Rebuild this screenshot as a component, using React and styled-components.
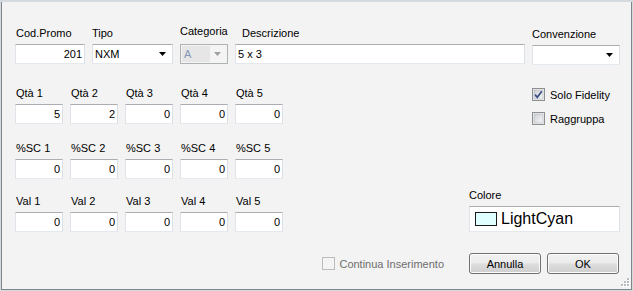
import React from 'react';
import styled, { createGlobalStyle } from 'styled-components';

const Global = createGlobalStyle`
  html, body { margin: 0; padding: 0; background: #d5dade; }
  body { font-family: "Liberation Sans", Arial, sans-serif; font-size: 11px; color: #000; }
  * { box-sizing: border-box; }
`;

const Frame = styled.div`
  width: 633px;
  height: 291px;
  padding: 2px 1px 1px 1px;
  background: #d5dade;
`;

const Window = styled.div`
  position: relative;
  height: 100%;
  background: #f3f3f3;
  border: 1px solid #7f858c;
  border-top: none;
  padding: 25px 11px 0 13px;
  display: flex;
  flex-direction: column;
`;

const TopRow = styled.div`
  display: flex;
  gap: 7px;
`;

const Field = styled.div`
  display: flex;
  flex-direction: column;
  width: ${p => (p.$w ? `${p.$w}px` : 'auto')};
  margin-top: ${p => p.$mt || 0}px;
`;

const Label = styled.div`
  height: 13px;
  line-height: 13px;
  white-space: nowrap;
  padding-left: ${p => p.$dx || 0}px;
  margin-top: ${p => p.$dy || 0}px;
  margin-bottom: ${p => 4 - (p.$dy || 0)}px;
`;

const TextBox = styled.div`
  height: ${p => p.$h || 20}px;
  background: #fff;
  border: 1px solid;
  border-color: #abadb3 #dbdfe6 #e3e9ef #e2e3ea;
  padding: 0 2px;
  display: flex;
  align-items: center;
  justify-content: ${p => (p.$right ? 'flex-end' : 'flex-start')};
  white-space: nowrap;
  overflow: hidden;
`;

const Combo = styled(TextBox)`
  justify-content: space-between;
  padding: 0 6px 0 2px;
  background: ${p => (p.$disabled ? '#f4f4f4' : '#fff')};
  border-color: ${p => (p.$disabled ? '#adb2b5' : '#abadb3 #dbdfe6 #e3e9ef #e2e3ea')};
`;

const DisabledSel = styled.span`
  display: inline-block;
  width: 28px;
  height: 16px;
  line-height: 16px;
  margin-left: -1px;
  padding-left: 2px;
  background: #e6e6e6;
  color: #8596b4;
`;

const Arrow = ({ color = '#000' }) => (
  <svg width="7" height="4" viewBox="0 0 7 4">
    <path d="M0 0h7L3.5 4z" fill={color} />
  </svg>
);

const Main = styled.div`
  display: flex;
  margin-top: 22px;
`;

const LeftGrid = styled.div`
  display: flex;
  flex-direction: column;
`;

const GridRow = styled.div`
  display: grid;
  grid-template-columns: repeat(5, 48px);
  column-gap: 7px;
  margin-top: ${p => p.$mt || 0}px;
`;

const RightCol = styled.div`
  flex: 1;
  display: flex;
  flex-direction: column;
  align-items: flex-end;
`;

const Checks = styled.div`
  width: 88px;
  margin-top: 1px;
  display: flex;
  flex-direction: column;
  gap: 11px;
`;

const CheckRow = styled.div`
  display: flex;
  align-items: center;
  height: 13px;
  gap: ${p => p.$gap || 5}px;
  white-space: nowrap;
  color: ${p => (p.$disabled ? '#6d6d6d' : '#000')};
  margin-right: ${p => p.$mr || 0}px;
`;

const CheckBox = ({ checked, disabled }) => (
  <svg width="13" height="13" viewBox="0 0 13 13">
    <defs>
      <linearGradient id={disabled ? 'cbd' : 'cbg'} x1="0" y1="0" x2="1" y2="1">
        <stop offset="0" stopColor={disabled ? '#f4f4f4' : '#cbcfd5'} />
        <stop offset="1" stopColor={disabled ? '#f4f4f4' : '#f7f7f7'} />
      </linearGradient>
    </defs>
    <rect x="0.5" y="0.5" width="12" height="12" fill="#f4f4f4" stroke={disabled ? '#bcbcbc' : '#8e8f8f'} />
    <rect x="2" y="2" width="9" height="9" fill={`url(#${disabled ? 'cbd' : 'cbg'})`} stroke={disabled ? 'none' : '#aeb3b9'} strokeWidth="0.6" />
    {checked && (
      <path d="M3 6.6 L5.3 9.3 L9.8 3.3" fill="none" stroke="#3f5184" strokeWidth="1.7" />
    )}
  </svg>
);

const ColorField = styled.div`
  width: 151px;
  margin-top: 64px;
  display: flex;
  flex-direction: column;
`;

const ColorBox = styled(TextBox)`
  height: 26px;
  padding: 0 0 0 5px;
  gap: 4px;
  font-size: 16px;
`;

const Swatch = styled.span`
  display: inline-block;
  width: 22px;
  height: 14px;
  border: 1px solid #1a1a1a;
  background: ${p => p.$color};
`;

const Footer = styled.div`
  display: flex;
  justify-content: flex-end;
  align-items: center;
  margin-top: 21px;
  padding-right: 1px;
  gap: 6px;
`;

const Button = styled.button`
  width: 72px;
  height: 21px;
  font-family: "Liberation Sans", Arial, sans-serif;
  font-size: 11px;
  color: #000;
  border: 1px solid #707070;
  border-radius: 3px;
  background: linear-gradient(#f2f2f2 0%, #ebebeb 48%, #dddddd 52%, #cfcfcf 100%);
  box-shadow: inset 0 0 0 1px #fcfcfc;
  padding: 0;
`;

const Grip = styled.svg`
  position: absolute;
  right: 1px;
  bottom: 1px;
`;

const qta = ['5', '2', '0', '0', '0'];

export default function App() {
  return (
    <>
      <Global />
      <Frame>
        <Window>
          <TopRow>
            <Field $w={70}>
              <Label $dx={1}>Cod.Promo</Label>
              <TextBox $right>201</TextBox>
            </Field>
            <Field $w={81}>
              <Label>Tipo</Label>
              <Combo>
                <span>NXM</span>
                <Arrow />
              </Combo>
            </Field>
            <Field $w={48}>
              <Label $dy={-2}>Categoria</Label>
              <Combo $disabled>
                <DisabledSel>A</DisabledSel>
                <Arrow color="#a0a0a0" />
              </Combo>
            </Field>
            <Field $w={290}>
              <Label $dx={7}>Descrizione</Label>
              <TextBox>5 x 3</TextBox>
            </Field>
            <Field $w={88} $mt={1}>
              <Label>Convenzione</Label>
              <Combo>
                <span />
                <Arrow />
              </Combo>
            </Field>
          </TopRow>

          <Main>
            <LeftGrid>
              <GridRow>
                {qta.map((v, i) => (
                  <Field key={i}>
                    <Label $dx={1}>Qtà {i + 1}</Label>
                    <TextBox $right>{v}</TextBox>
                  </Field>
                ))}
              </GridRow>
              <GridRow $mt={18}>
                {[1, 2, 3, 4, 5].map(i => (
                  <Field key={i}>
                    <Label $dx={1}>%SC {i}</Label>
                    <TextBox $right>0</TextBox>
                  </Field>
                ))}
              </GridRow>
              <GridRow $mt={16}>
                {[1, 2, 3, 4, 5].map(i => (
                  <Field key={i}>
                    <Label $dx={1}>Val {i}</Label>
                    <TextBox $right>0</TextBox>
                  </Field>
                ))}
              </GridRow>
            </LeftGrid>

            <RightCol>
              <Checks>
                <CheckRow>
                  <CheckBox checked />
                  <span>Solo Fidelity</span>
                </CheckRow>
                <CheckRow>
                  <CheckBox />
                  <span>Raggruppa</span>
                </CheckRow>
              </Checks>
              <ColorField>
                <Label>Colore</Label>
                <ColorBox>
                  <Swatch $color="#e0ffff" />
                  <span>LightCyan</span>
                </ColorBox>
              </ColorField>
            </RightCol>
          </Main>

          <Footer>
            <CheckRow $disabled $gap={4} $mr={19}>
              <CheckBox disabled />
              <span>Continua Inserimento</span>
            </CheckRow>
            <Button>Annulla</Button>
            <Button>OK</Button>
          </Footer>

          <Grip width="10" height="10" viewBox="0 0 10 10">
            {[[7, 0], [4, 3], [7, 3], [1, 6], [4, 6], [7, 6]].map(([x, y], i) => (
              <g key={i}>
                <rect x={x + 1} y={y + 1} width="2" height="2" fill="#fff" />
                <rect x={x} y={y} width="2" height="2" fill="#b9bcc0" />
              </g>
            ))}
          </Grip>
        </Window>
      </Frame>
    </>
  );
}
